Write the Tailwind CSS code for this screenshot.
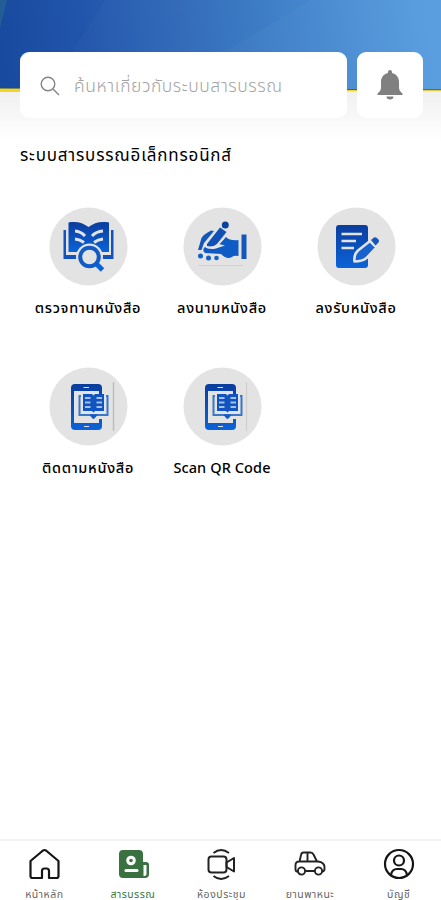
<!DOCTYPE html>
<html lang="th">
<head>
  <meta charset="UTF-8">
  <meta name="viewport" content="width=device-width, initial-scale=1">
  <title>ระบบสารบรรณอิเล็กทรอนิกส์</title>
  <script src="https://cdn.jsdelivr.net/npm/@tailwindcss/browser@4"></script>
</head>
<body class="bg-white font-['Noto_Sans','Noto_Sans_Thai',sans-serif] text-black">
  <div class="relative flex flex-col w-[441px] h-[900px] overflow-hidden">

    <!-- Header background -->
    <svg class="absolute top-0 left-0" width="441" height="142" viewBox="0 0 441 142">
      <defs>
        <linearGradient id="sky" gradientUnits="userSpaceOnUse" x1="0" y1="60" x2="425" y2="0">
          <stop offset="0" stop-color="#184a9f"/>
          <stop offset="0.2" stop-color="#2155ab"/>
          <stop offset="0.5" stop-color="#3470bd"/>
          <stop offset="0.75" stop-color="#4387ce"/>
          <stop offset="1" stop-color="#559bdf"/>
        </linearGradient>
        <linearGradient id="fade" x1="0" y1="0" x2="0" y2="1">
          <stop offset="0" stop-color="#f0f0f0"/>
          <stop offset="1" stop-color="#ffffff"/>
        </linearGradient>
      </defs>
      <rect y="91" width="441" height="51" fill="url(#fade)"/>
      <rect width="441" height="90" fill="url(#sky)"/>
      <path d="M0 0H7L0 28Z" fill="#286591" fill-opacity="0.7"/>
      <path d="M105 0H310L228 50L190 90H48Z" fill="#fff" fill-opacity="0.02"/>
      <path d="M310 0H441V90H190L228 50Z" fill="#fff" fill-opacity="0.04"/>
      <path d="M0 87.5L441 89.5V90.5L0 89Z" fill="#1c4c83"/>
      <path d="M0 88.5L441 90.3V91.3L0 92Z" fill="#f5d51f"/>
    </svg>

    <!-- Search -->
    <div class="relative flex gap-2.5 pt-[52px] pl-5 pr-[18px]">
      <label class="flex items-center w-[327px] h-[66px] rounded-[9px] bg-white pl-5">
        <svg class="mt-0.5" width="20" height="20" viewBox="0 0 20 20" fill="none" stroke="#858585" stroke-width="1.4">
          <circle cx="8" cy="8" r="6.8"/>
          <path d="M13 13L19 19"/>
        </svg>
        <span class="ml-[14px] text-[17.5px] leading-6 font-light tracking-[0.54px] whitespace-nowrap text-[#a3a3a3]">ค้นหาเกี่ยวกับระบบสารบรรณ</span>
      </label>
      <button class="flex items-center justify-center w-[66px] h-[66px] rounded-[9px] bg-white">
        <svg width="26" height="30" viewBox="0 0 26 30" fill="#808080">
          <path d="M13 0c-1.200 0-2 .8-2 2v1C6.500 4 4 7.500 4 12v5c0 3-1 4.500-3.500 6.500V25h25v-1.500C23 21.500 22 20 22 17v-5c0-4.500-2.500-8-7-9V2c0-1.200-.8-2-2-2Z"/>
          <path d="M9.500 26.500h7a3.500 3 0 0 1-7 0Z"/>
        </svg>
      </button>
    </div>

    <h1 class="relative mt-[25px] ml-5 h-6 text-[17px] leading-6 tracking-[0.8px] whitespace-nowrap">ระบบสารบรรณอิเล็กทรอนิกส์</h1>

    <!-- Menu -->
    <main class="grid grid-cols-3 gap-y-[42px] mt-10 pl-[21px] pr-[18px] text-[14.5px] leading-5 font-medium tracking-[0.7px]">
      <a class="flex flex-col items-center h-[118px] whitespace-nowrap">
        <svg width="79" height="79" viewBox="0 0 79 79">
          <defs>
            <linearGradient id="blue" x1="0" y1="0" x2="0" y2="1">
              <stop offset="0" stop-color="#0b3d9f"/>
              <stop offset="1" stop-color="#0a63d8"/>
            </linearGradient>
          </defs>
          <circle cx="39.5" cy="39.5" r="39" fill="#e3e3e3"/>
          <path d="M14.500 23h2.500v25h14v4H14.500ZM62 23h2.500v29H49v-4h13Z" fill="#1453bb"/>
          <path d="M19.500 15.500C28 14 34 16 39.500 20C45 16 51 14 60 15.500V45H19.500Z" fill="url(#blue)"/>
          <path d="M26 24Q32 24.500 36 29M26 32Q31 32.500 35 35.500M54 24Q47 24.500 43 29M54 32Q49 32.500 45 35.500" fill="none" stroke="#e3e3e3" stroke-width="3"/>
          <circle cx="40.5" cy="50" r="13.5" fill="#e3e3e3"/>
          <path d="M47 56.500L53.500 63" stroke="#0a63d8" stroke-width="5"/>
          <circle cx="40.5" cy="50" r="9.3" fill="#e3e3e3" stroke="#115bc8" stroke-width="4"/>
        </svg>
        <span class="mt-[11px]">ตรวจทานหนังสือ</span>
      </a>
      <a class="flex flex-col items-center h-[118px] whitespace-nowrap">
        <svg width="79" height="79" viewBox="0 0 79 79">
          <circle cx="39.5" cy="39.5" r="39" fill="#e3e3e3"/>
          <path d="M15 58.500H60" stroke="#d2d2d2"/>
          <path d="M15 43L18.500 31Q20 28 23 26.500L28 23.500L31 24L21 36L18.500 43Z" fill="#1556ba"/>
          <path d="M24 37L37 20.500L43.500 25L34 37Q29 41 24 40Z" fill="#1150b6"/>
          <circle cx="42.300" cy="18" r="3.500" fill="#0b429f"/>
          <path d="M36 37L43 30Q47 34 55.500 33V49Q51 48 49 50Q44 53 38 47L22 46Q18.500 43 22 40Q26 43 33 41.500L42 38.500Z" fill="#0f5bc6"/>
          <path d="M23 40Q30 41 33 39.500L41 31" fill="none" stroke="#e3e3e3" stroke-width="1.800"/>
          <path d="M58.500 27.500H63.500V52H58.500Z" fill="#1556ba"/>
          <circle cx="17.5" cy="49" r="2.500" fill="#1260cb"/>
          <circle cx="25.500" cy="51" r="2.500" fill="#1260cb"/>
          <circle cx="33.500" cy="51" r="2.300" fill="#1260cb"/>
        </svg>
        <span class="mt-[11px]">ลงนามหนังสือ</span>
      </a>
      <a class="flex flex-col items-center h-[118px] whitespace-nowrap">
        <svg width="79" height="79" viewBox="0 0 79 79">
          <circle cx="39.5" cy="39.5" r="39" fill="#e3e3e3"/>
          <rect x="19" y="18" width="32" height="43" rx="3" fill="url(#blue)"/>
          <path d="M24.500 27H45M24.500 34H39M24.500 41H37" stroke="#e3e3e3" stroke-width="2.400"/>
          <path d="M37.500 54.500Q36.500 48 41 43.500L53 34L59.500 40.500L49.500 51Q45 54.500 37.500 54.500Z" fill="#1762ce" stroke="#e3e3e3" stroke-width="2.600" stroke-linejoin="round"/>
          <path d="M51 51.500L58 44V62H51Z" fill="#e3e3e3"/>
          <path d="M54 33L57 30.500Q59 29.500 61 32Q63 34 61 36L58.500 38.500Z" fill="#1556ba"/>
        </svg>
        <span class="mt-[11px]">ลงรับหนังสือ</span>
      </a>
      <a class="flex flex-col items-center h-[118px] whitespace-nowrap">
        <svg width="79" height="79" viewBox="0 0 79 79">
          <circle cx="39.5" cy="39.5" r="39" fill="#e3e3e3"/>
          <path d="M64.500 15V64" stroke="#bdbdbd" stroke-width="1.500"/>
          <rect x="22" y="17" width="31" height="46" rx="4" fill="url(#blue)"/>
          <rect x="25" y="24" width="25" height="32" fill="#e3e3e3"/>
          <path d="M34.500 20.500H40M35 59.500H40" stroke="#e3e3e3"/>
          <path d="M29 27H60V52H29Z" fill="#e3e3e3"/>
          <path d="M32 29H30.500V48H58.500V29H57" fill="none" stroke="#3977c8" stroke-width="2"/>
          <path d="M34 27H43L44.500 28.500L46 27H55V44H46L44.500 45.500L43 44H34Z" fill="#1254bf"/>
          <path d="M36 31H41.500M36 35.500H41.500M36 40H41.500M47.500 31H53M47.500 35.500H53M47.500 40H53" stroke="#9fc1ec" stroke-width="1.800"/>
          <path d="M41 48H48L45 51.500H44Z" fill="#0e5acb" stroke="#0e5acb" stroke-width="1"/>
        </svg>
        <span class="mt-[11px]">ติดตามหนังสือ</span>
      </a>
      <a class="flex flex-col items-center h-[118px] whitespace-nowrap">
        <svg width="79" height="79" viewBox="0 0 79 79">
          <circle cx="39.5" cy="39.5" r="39" fill="#e3e3e3"/>
          <path d="M63.500 15V64" stroke="#cfcfcf" stroke-width="1.300"/>
          <rect x="22" y="17" width="31" height="46" rx="4" fill="url(#blue)"/>
          <rect x="25" y="24" width="25" height="32" fill="#e3e3e3"/>
          <path d="M34.500 20.500H40M35 59.500H40" stroke="#e3e3e3"/>
          <path d="M29 27H60V52H29Z" fill="#e3e3e3"/>
          <path d="M32 29H30.500V48H58.500V29H57" fill="none" stroke="#3977c8" stroke-width="2"/>
          <path d="M34 27H43L44.500 28.500L46 27H55V44H46L44.500 45.500L43 44H34Z" fill="#1254bf"/>
          <path d="M36 31H41.500M36 35.500H41.500M36 40H41.500M47.500 31H53M47.500 35.500H53M47.500 40H53" stroke="#9fc1ec" stroke-width="1.800"/>
          <path d="M41 48H48L45 51.500H44Z" fill="#0e5acb" stroke="#0e5acb" stroke-width="1"/>
        </svg>
        <span class="mt-[11px] tracking-[0.1px]">Scan QR Code</span>
      </a>
    </main>

    <!-- Bottom navigation -->
    <nav class="grid grid-cols-5 mt-auto -mr-[2px] h-[61px] border-t-2 border-[#f4f4f4] pt-1.5 text-[10.5px] leading-4 tracking-[0.5px] text-[#666]">
      <a class="flex flex-col items-center whitespace-nowrap">
        <svg width="34" height="34" viewBox="0 0 34 34" fill="none" stroke="#151515" stroke-width="2.2" stroke-linejoin="round">
          <path d="M3.500 14L16 3.500Q17.500 2.500 19 3.500L31.500 14V29Q31.500 31 29.500 31H22V24Q22 21.500 19.500 21.500H17.500Q15 21.500 15 24V31H5.500Q3.500 31 3.500 29Z"/>
        </svg>
        <span class="mt-[5px]">หน้าหลัก</span>
      </a>
      <a class="flex flex-col items-center whitespace-nowrap text-[#39753d]">
        <svg width="34" height="34" viewBox="0 0 34 34">
          <rect x="3" y="3" width="24" height="28" rx="4" fill="#397141"/>
          <path d="M25 15H30Q33 15 33 18V27Q33 31 29 31H23Z" fill="#397141"/>
          <path d="M27.500 18H30.500V27Q30.500 29 27.500 29Z" fill="#fff"/>
          <circle cx="15" cy="13.5" r="3.3" fill="none" stroke="#fff" stroke-width="3"/>
          <path d="M10 23.500H21" stroke="#fff" stroke-width="3" stroke-linecap="round"/>
        </svg>
        <span class="mt-[5px]">สารบรรณ</span>
      </a>
      <a class="flex flex-col items-center whitespace-nowrap">
        <svg width="34" height="34" viewBox="0 0 34 34" fill="none" stroke="#222" stroke-width="2" stroke-linejoin="round">
          <rect x="4.500" y="9.500" width="18" height="16" rx="3"/>
          <path d="M22.500 15.500L30 11V24.500L22.500 20ZM9.500 6Q17 0 25 6M9.500 29Q17 35 25 29"/>
        </svg>
        <span class="mt-[5px]">ห้องประชุม</span>
      </a>
      <a class="flex flex-col items-center whitespace-nowrap">
        <svg width="34" height="34" viewBox="0 0 34 34" fill="none" stroke="#222" stroke-width="1.9" stroke-linejoin="round">
          <path d="M5 24.500H4Q2.500 24.500 2.500 22V18Q2.500 14.500 6 14.500H25Q31.500 15.500 31.500 20V22Q31.500 24.500 29 24.500M12 24H22M6.500 14.500L8 8Q8.500 5.500 10.500 5.500H17.500Q19.500 5.500 20.500 7.500L24 14.500M14.500 5.500V14.500"/>
          <circle cx="8.5" cy="24" r="3.6"/>
          <circle cx="25.5" cy="24" r="3.6"/>
        </svg>
        <span class="mt-[5px]">ยานพาหนะ</span>
      </a>
      <a class="flex flex-col items-center whitespace-nowrap">
        <svg width="34" height="34" viewBox="0 0 34 34" fill="none" stroke="#151515" stroke-width="2.2">
          <circle cx="17" cy="17" r="14"/>
          <circle cx="17" cy="13.5" r="5"/>
          <path d="M9 28Q10 22 15 22H19Q24 22 25 28"/>
        </svg>
        <span class="mt-[5px]">บัญชี</span>
      </a>
    </nav>
  </div>
</body>
</html>
